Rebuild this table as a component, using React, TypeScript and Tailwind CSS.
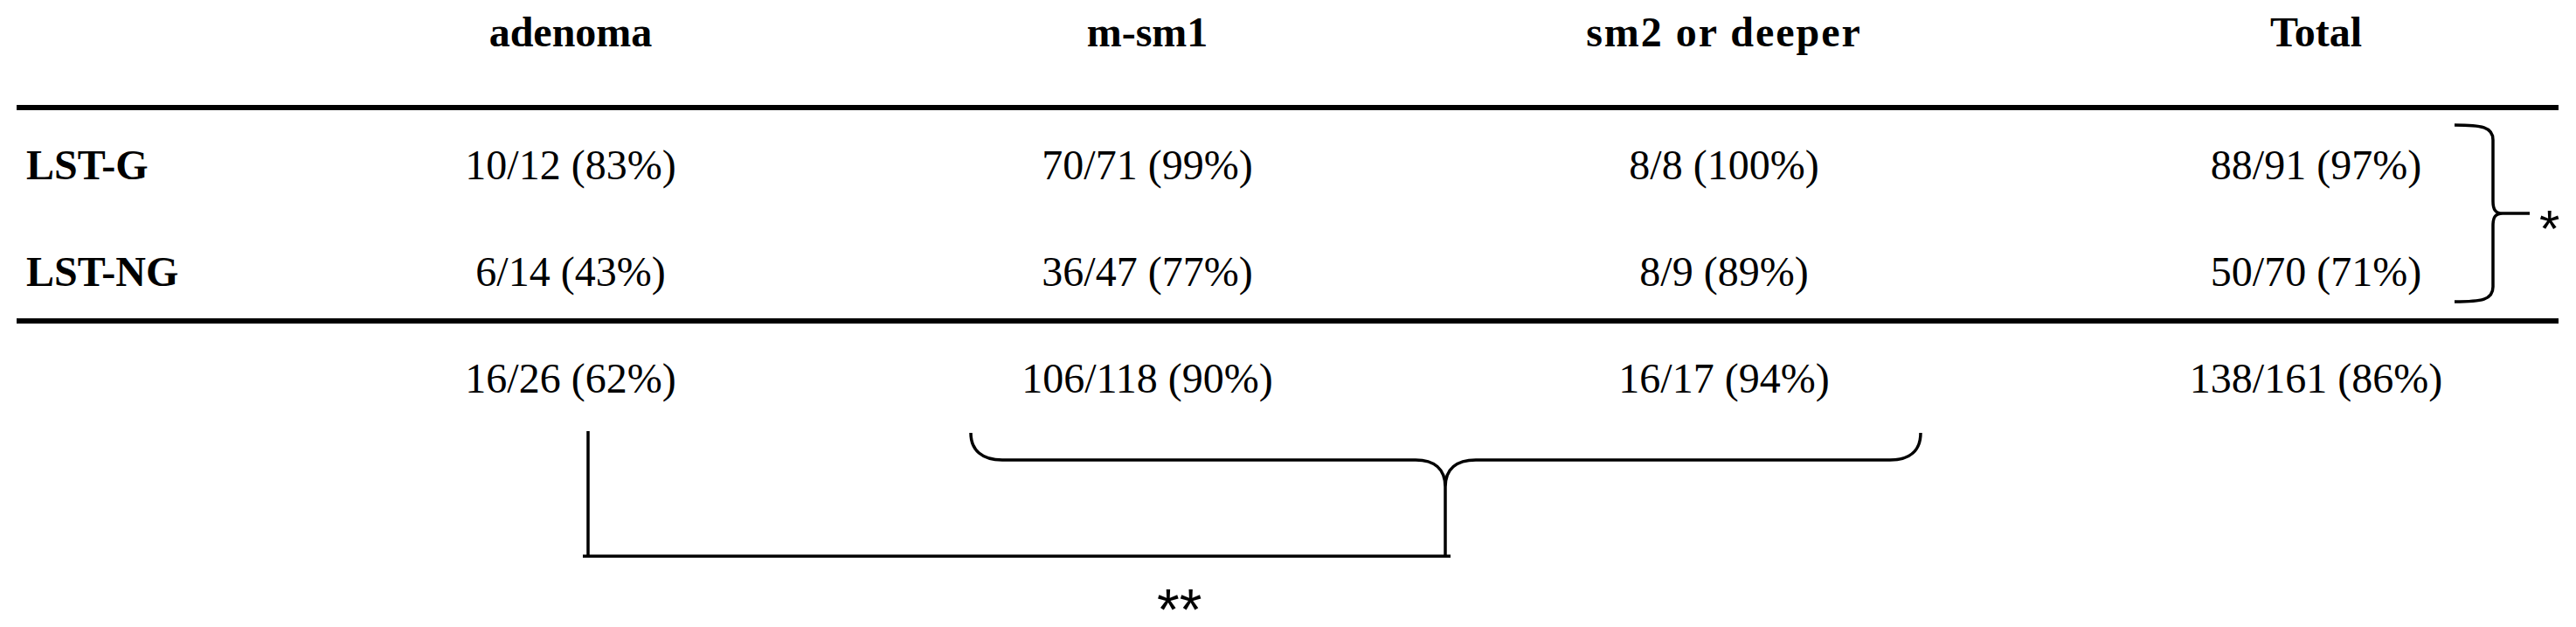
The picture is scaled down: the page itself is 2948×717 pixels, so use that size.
import React from "react";

const serif = "font-['Liberation_Serif','Times_New_Roman',serif]";

type Row = { label: string; cells: string[] };

const rows: Row[] = [
  { label: "LST-G", cells: ["10/12 (83%)", "70/71 (99%)", "8/8 (100%)", "88/91 (97%)"] },
  { label: "LST-NG", cells: ["6/14 (43%)", "36/47 (77%)", "8/9 (89%)", "50/70 (71%)"] },
];

function Cells({ cells, bold }: { cells: string[]; bold?: boolean }) {
  const w = bold ? "font-bold" : "font-normal";
  return (
    <>
      <div className={`text-center whitespace-nowrap ${w}`}>{cells[0]}</div>
      <div className={`text-center whitespace-nowrap ${w}`}>{cells[1]}</div>
      <div className={`text-center whitespace-nowrap ${w}`}>{cells[2]}</div>
      <div className={`text-center whitespace-nowrap pl-[70px] ${w}`}>{cells[3]}</div>
    </>
  );
}

export default function App() {
  return (
    <div className={`relative w-[2948px] h-[717px] overflow-hidden bg-white text-black ${serif} text-[48px] leading-[48px]`}>
      <div className="ml-[19px] w-[2909px]">
        {/* header */}
        <div className="h-[120px] pt-[13px] grid grid-cols-[304px_660px_660px_660px_1fr]">
          <div />
          <div className="text-center font-bold whitespace-nowrap">adenoma</div>
          <div className="text-center font-bold whitespace-nowrap">m-sm1</div>
          <div className="text-center font-bold whitespace-nowrap tracking-[2px]">sm2 or deeper</div>
          <div className="text-center font-bold whitespace-nowrap pl-[70px]">Total</div>
        </div>
        <div className="h-[6px] bg-black" />
        {/* body */}
        <div className="pt-[39px] pb-[29px] flex flex-col gap-[74px]">
          {rows.map((r) => (
            <div key={r.label} className="h-[48px] grid grid-cols-[304px_660px_660px_660px_1fr]">
              <div className="pl-[11px] font-bold whitespace-nowrap">{r.label}</div>
              <Cells cells={r.cells} />
            </div>
          ))}
        </div>
        <div className="h-[6px] bg-black" />
        {/* totals */}
        <div className="pt-[39px] h-[87px] grid grid-cols-[304px_660px_660px_660px_1fr]">
          <div />
          <Cells cells={["16/26 (62%)", "106/118 (90%)", "16/17 (94%)", "138/161 (86%)"]} />
        </div>
      </div>

      {/* lower annotations */}
      <svg width="2948" height="222" viewBox="0 457 2948 222" className="block" fill="none" stroke="black">
        <path
          d="M 1111 495 C 1111 515 1124 526 1147 526 L 1620 526 C 1641 526 1654 536 1654 557 C 1654 536 1667 526 1689 526 L 2163 526 C 2186 526 2198 515 2198 495"
          strokeWidth="3.5"
        />
        <path d="M 673 493 L 673 636 M 667 636 L 1660 636 M 1654 557 L 1654 636" strokeWidth="3.5" />
      </svg>
      <div className="pl-[1324px] font-['Liberation_Sans','Arial',sans-serif] text-[66px] leading-[36px]">**</div>

      {/* right brace with significance mark */}
      <svg
        width="100"
        height="220"
        viewBox="2800 135 100 220"
        className="absolute left-[2800px] top-[135px]"
        fill="none"
        stroke="black"
      >
        <path
          d="M 2809 143 C 2840 143 2853 145 2853 160 L 2853 230 C 2853 240 2856 244 2864 244 L 2895 244 M 2864 244 C 2856 244 2853 248 2853 258 L 2853 328 C 2853 343 2840 345 2809 345"
          strokeWidth="3.5"
        />
      </svg>
      <span className="absolute left-[2906px] top-[232px] font-['Liberation_Sans','Arial',sans-serif] text-[60px] leading-[60px]">
        *
      </span>
    </div>
  );
}
